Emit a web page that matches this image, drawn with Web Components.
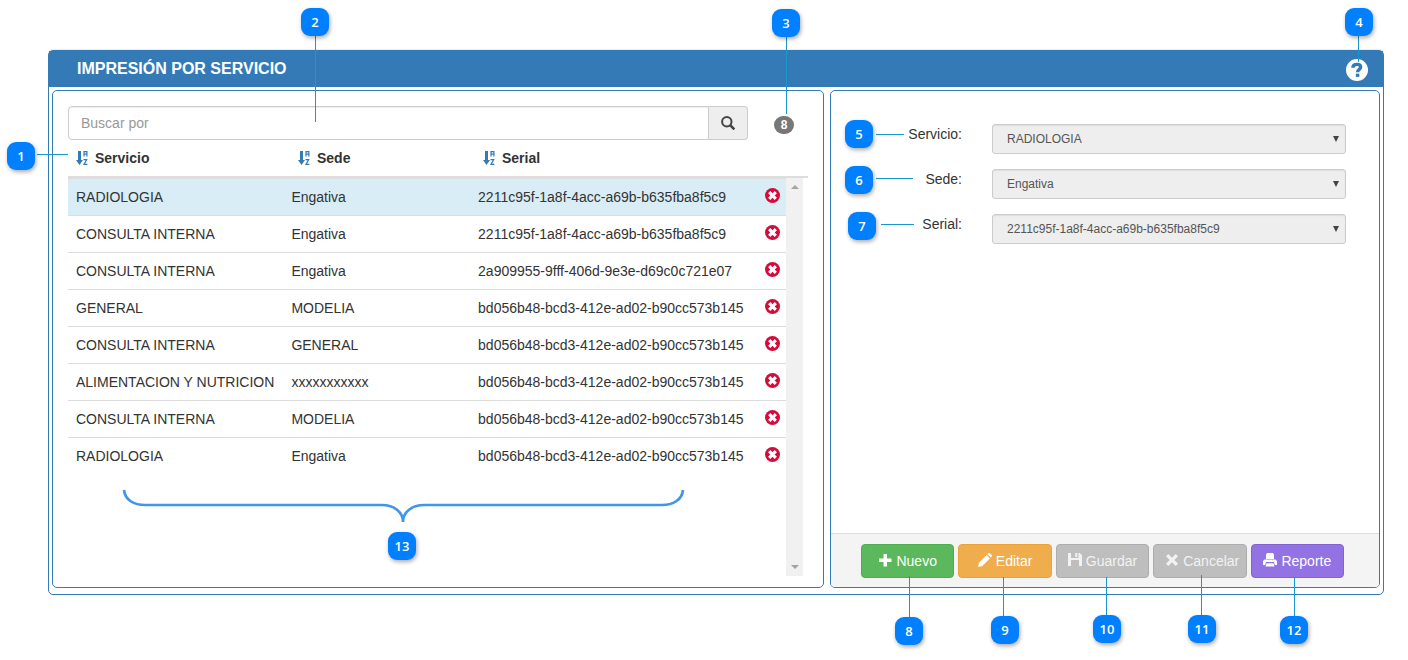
<!DOCTYPE html>
<html lang="es">
<head>
<meta charset="utf-8">
<title>Impresión por servicio</title>
<style>
  body { margin: 0; background: #fff; color: #333; font: 14px/20px "Liberation Sans", Arial, sans-serif; }
</style>
</head>
<body>
<print-page>
  <title-bar slot="title">IMPRESIÓN POR SERVICIO</title-bar>
  <service-list slot="list"></service-list>
  <service-form slot="form"></service-form>
  <callout-layer slot="notes"></callout-layer>
</print-page>

<script>
const ICONS = {
  sort: '<path d="M2 1h3v9h2L3.500 15 0 10h2z"/><path d="M8 6.500V1.600h2.900v4.900M8 4.200h3M7.500 9.600h3.200L8 14.400h3.400" fill="none" stroke="currentColor" stroke-width="1.200"/>',
  search: '<circle cx="5.800" cy="5.800" r="4.700" fill="none" stroke="currentColor" stroke-width="2"/><path d="M9.200 9.200l4.200 4.200" stroke="currentColor" stroke-width="2.600"/>',
  remove: '<circle cx="7.500" cy="7.500" r="7.500"/><path d="M4.200 4.200l6.600 6.600M10.800 4.200l-6.600 6.600" stroke="#fff" stroke-width="3.200"/>',
  help: '<circle cx="7.500" cy="7.500" r="7.500" fill="#fff"/><path d="M4.700 5.900C4.700 4.200 5.900 3.700 7.500 3.700c1.600 0 2.500.7 2.500 1.800 0 1.700-2.100 1.500-2.100 3.500" fill="none" stroke="#337ab7" stroke-width="2.300"/><path d="M6.700 10h2.400v2.200H6.700z" fill="#337ab7"/>',
  plus: '<path d="M5.500 1h3.500v4.500h4.500V9H9v4.500H5.500V9H1V5.500h4.500z"/>',
  pencil: '<path d="M0 14l1-4.300 7.600-7.600 3.300 3.300L4.300 13zM9.400 1.300l1-1c.4-.4 1-.4 1.400 0l1.900 1.900c.4.400.4 1 0 1.400l-1 1z"/>',
  save: '<path fill-rule="evenodd" d="M0 0h3v5h7.500V0h1.300L14 2.200V13h-3V8H3v5H0zM7.300 0h2v4h-2zM3 7h8v1H3z"/>',
  cross: '<path d="M3.300 1L7 4.700 10.700 1 13 3.300 9.300 7l3.700 3.700L10.700 13 7 9.300 3.300 13 1 10.700 4.700 7 1 3.300z"/>',
  print: '<path d="M4 0h6l1 1.500V6H3V1.500zM1.500 6.500h11L14 8v4h-2.200L11 9H3l-.8 3H0V8zM3.500 10.200h7l1 3.300h-9z"/>'
};
const icon = (name, size = 14, box = 14) =>
  `<svg width="${size}" height="${size}" viewBox="0 0 ${box} ${box}" fill="currentColor" aria-hidden="true">${ICONS[name]}</svg>`;

function define(name, render) {
  customElements.define(name, class extends HTMLElement {
    constructor() {
      super();
      const template = document.createElement('template');
      template.innerHTML = render(this);
      this.attachShadow({ mode: 'open' }).append(template.content.cloneNode(true));
    }
  });
}

define('print-page', () => `
  <style>
    :host { display: block; position: relative; }
    main { box-sizing: border-box; min-height: 100vh; padding: 50px 24px 65px 48px; display: flex; flex-direction: column; }
    section { flex: 1; display: flex; flex-direction: column; border: 1px solid #337ab7; border-radius: 5px; box-shadow: 0 -1px 0 #eee; }
    .columns { flex: 1; display: grid; grid-template-columns: 772fr 550fr; gap: 6px; padding: 3px 3px 6px; }
  </style>
  <main><section>
    <slot name="title"></slot>
    <div class="columns"><slot name="list"></slot><slot name="form"></slot></div>
  </section></main>
  <slot name="notes"></slot>`);

define('title-bar', () => `
  <style>
    :host { display: flex; align-items: center; justify-content: space-between; height: 36px; padding: 0 15px 0 28px; background: #337ab7; color: #fff; }
    h1 { margin: 0; font-size: 16px; line-height: 20px; }
    button { display: flex; margin: 2px 0 0; padding: 0; border: 0; background: none; }
  </style>
  <h1><slot></slot></h1>
  <button type="button" aria-label="Ayuda">${icon('help', 22, 15)}</button>`);

const ROWS = [
  ['RADIOLOGIA', 'Engativa', '2211c95f-1a8f-4acc-a69b-b635fba8f5c9'],
  ['CONSULTA INTERNA', 'Engativa', '2211c95f-1a8f-4acc-a69b-b635fba8f5c9'],
  ['CONSULTA INTERNA', 'Engativa', '2a909955-9fff-406d-9e3e-d69c0c721e07'],
  ['GENERAL', 'MODELIA', 'bd056b48-bcd3-412e-ad02-b90cc573b145'],
  ['CONSULTA INTERNA', 'GENERAL', 'bd056b48-bcd3-412e-ad02-b90cc573b145'],
  ['ALIMENTACION Y NUTRICION', 'xxxxxxxxxxx', 'bd056b48-bcd3-412e-ad02-b90cc573b145'],
  ['CONSULTA INTERNA', 'MODELIA', 'bd056b48-bcd3-412e-ad02-b90cc573b145'],
  ['RADIOLOGIA', 'Engativa', 'bd056b48-bcd3-412e-ad02-b90cc573b145']
];

define('service-list', () => `
  <style>
    :host { display: flex; flex-direction: column; padding: 15px 15px 11px; border: 1px solid #337ab7; border-radius: 5px; }
    .search { display: flex; align-items: center; padding-right: 14px; }
    .group { flex: 1; display: flex; margin-right: 26px; }
    input { flex: 1; min-width: 0; box-sizing: border-box; height: 34px; padding: 0 12px; border: 1px solid #ccc; border-radius: 4px 0 0 4px; box-shadow: inset 0 1px 1px #eee; font: inherit; color: inherit; }
    input::placeholder { color: #999; opacity: 1; }
    .group button { box-sizing: border-box; display: flex; align-items: center; justify-content: center; width: 39px; border: 1px solid #ccc; border-left: 0; border-radius: 0 4px 4px 0; background: #eee; color: #444; padding: 0; }
    .badge { box-sizing: border-box; width: 20px; height: 18px; margin-top: 4px; border-radius: 9px; background: #777; color: #fff; font: bold 12px/18px "Liberation Sans", Arial, sans-serif; text-align: center; }
    table { width: 100%; table-layout: fixed; border-collapse: separate; border-spacing: 0; }
    th, td { box-sizing: border-box; padding: 0 8px; text-align: left; white-space: nowrap; }
    th { height: 38px; border-bottom: 2px solid #ddd; }
    th svg { color: #337ab7; vertical-align: -2px; margin-right: 4px; }
    td { height: 37px; border-top: 1px solid #ddd; padding-bottom: 1px; }
    td:last-child { padding: 0; text-align: center; }
    tr.active td { background: #d9edf7; }
    td button { border: 0; padding: 0; background: none; color: #d50b3c; display: block; margin: 0 auto 4px; height: 15px; }
    td svg { display: block; }
    .s30 { width: 30%; } .s26 { width: 26%; } .s25 { width: 25%; } .act { width: 28px; }
    .scroll { flex: 1; display: flex; padding-right: 5px; }
    .rows { flex: 1; }
    .bar { width: 17px; background: #f1f1f1; display: flex; flex-direction: column; justify-content: space-between; align-items: center; padding: 7px 0; box-sizing: border-box; }
    .bar i { border: 4px solid transparent; }
    .bar i:first-child { border-top: 0; border-bottom-color: #a3a3a3; }
    .bar i:last-child { border-bottom: 0; border-top-color: #a3a3a3; }
  </style>
  <div class="search">
    <div class="group">
      <input type="text" placeholder="Buscar por" aria-label="Buscar por">
      <button type="button" aria-label="Buscar">${icon('search')}</button>
    </div>
    <span class="badge">8</span>
  </div>
  <table aria-label="Encabezados">
    <colgroup><col class="s30"><col class="s25"><col></colgroup>
    <thead><tr>${['Servicio', 'Sede', 'Serial'].map(h => `<th scope="col">${icon('sort', 15, 15)}${h}</th>`).join('')}</tr></thead>
  </table>
  <div class="scroll">
    <div class="rows"><table aria-label="Servicios">
      <colgroup><col class="s30"><col class="s26"><col><col class="act"></colgroup>
      <tbody>${ROWS.map((r, i) => `<tr${i ? '' : ' class="active"'}>${r.map(c => `<td>${c}</td>`).join('')}<td><button type="button" aria-label="Eliminar">${icon('remove', 15, 15)}</button></td></tr>`).join('')}</tbody>
    </table></div>
    <div class="bar" aria-hidden="true"><i></i><i></i></div>
  </div>`);

define('service-form', () => `
  <style>
    :host { display: flex; flex-direction: column; border: 1px solid #337ab7; border-radius: 5px; overflow: hidden; }
    form { flex: 1; display: flex; flex-direction: column; gap: 15px; padding: 33px 33px 0 15px; }
    footer { display: flex; gap: 4px; padding: 10px 35px 9px 30px; border-top: 1px solid #ddd; background: #f4f4f4; }
  </style>
  <form>
    <select-field label="Servicio:" value="RADIOLOGIA"></select-field>
    <select-field label="Sede:" value="Engativa"></select-field>
    <select-field label="Serial:" value="2211c95f-1a8f-4acc-a69b-b635fba8f5c9"></select-field>
  </form>
  <footer>
    <action-button icon="plus" tone="green">Nuevo</action-button>
    <action-button icon="pencil" tone="orange">Editar</action-button>
    <action-button icon="save" tone="gray">Guardar</action-button>
    <action-button icon="cross" tone="gray">Cancelar</action-button>
    <action-button icon="print" tone="purple">Reporte</action-button>
  </footer>`);

customElements.define('select-field', class extends HTMLElement {
  connectedCallback() {
    this.attachShadow({ mode: 'open' }).innerHTML = `
      <style>
        :host { display: grid; grid-template-columns: 1fr 354px; gap: 30px; align-items: start; }
        label { text-align: right; line-height: 20px; }
        div { display: grid; align-items: center; }
        select { grid-area: 1 / 1; appearance: none; width: 100%; height: 30px; padding: 0 30px 0 14px; border: 1px solid #ccc; border-radius: 3px; background: #eee; box-shadow: inset 0 1px 1px #ddd; color: #555; opacity: 1; font: 12px/18px "Liberation Sans", Arial, sans-serif; }
        i { grid-area: 1 / 1; justify-self: end; margin-right: 7px; border: 3px solid transparent; border-top: 6px solid #444; border-bottom: 0; pointer-events: none; }
      </style>
      <label for="field">${this.getAttribute('label')}</label>
      <div><select id="field" disabled><option>${this.getAttribute('value')}</option></select><i></i></div>`;
  }
});

customElements.define('action-button', class extends HTMLElement {
  connectedCallback() {
    const tone = this.getAttribute('tone');
    this.attachShadow({ mode: 'open' }).innerHTML = `
      <style>
        :host { display: block; flex: 1 1 0; min-width: 0; }
        button { box-sizing: border-box; width: 100%; height: 34px; padding: 0 11px; border: 1px solid; border-radius: 4px; color: #fff; font: inherit; text-align: center; white-space: nowrap; }
        svg { vertical-align: -1px; margin-right: 4px; }
        .green { background: #5cb85c; border-color: #4cae4c; }
        .orange { background: #f0ad4e; border-color: #eea236; }
        .gray { background: #bebebe; border-color: #adadad; color: #f2f2f2; }
        .purple { background: #9373e3; border-color: #8263cf; }
      </style>
      <button type="button" class="${tone}"${tone === 'gray' ? ' disabled' : ''}>${icon(this.getAttribute('icon'))}<slot></slot></button>`;
  }
});

/* Numbered notes: left, top of the pin, then its leader line. */
const NOTES = [
  [7, 142, 'M37 154.500H68'], [301, 8, 'M315.500 36V122'], [772, 9, 'M786.500 37V114'],
  [1345, 8, 'M1358.500 36V62'], [845, 120, 'M876 134.500H904'], [845, 166, 'M876 178.500H913'],
  [848, 212, 'M881 224.500H914'], [895, 617, 'M909.500 576V617'], [991, 616, 'M1003.500 577V616'],
  [1093, 615, 'M1106.500 577V615'], [1188, 615, 'M1201.500 575V615'], [1280, 616, 'M1294.500 577V616'],
  [388, 532, '']
];
define('callout-layer', () => `
  <style>
    :host { position: absolute; top: 0; left: 0; pointer-events: none; }
    svg { display: block; }
    span { position: absolute; width: 28px; height: 28px; border-radius: 9px; background: #007fff; box-shadow: 1px 2px 4px #0005; color: #fff; font: 600 13px/28px "Open Sans", sans-serif; text-align: center; }
  </style>
  <svg width="1408" height="660" fill="none" aria-hidden="true">
    <path d="${NOTES.map(n => n[2]).join('')}" stroke="#1a98cc"/>
    <path d="M124 490C125 500 134 505 145 505H382C394 505 403 512 403 522C403 512 412 505 424 505H662C673 505 682 500 683 490" stroke="#4096ea" stroke-width="2.700"/>
  </svg>
  ${NOTES.map((n, i) => `<span style="left:${n[0]}px;top:${n[1]}px">${i + 1}</span>`).join('')}`);
</script>
</body>
</html>
